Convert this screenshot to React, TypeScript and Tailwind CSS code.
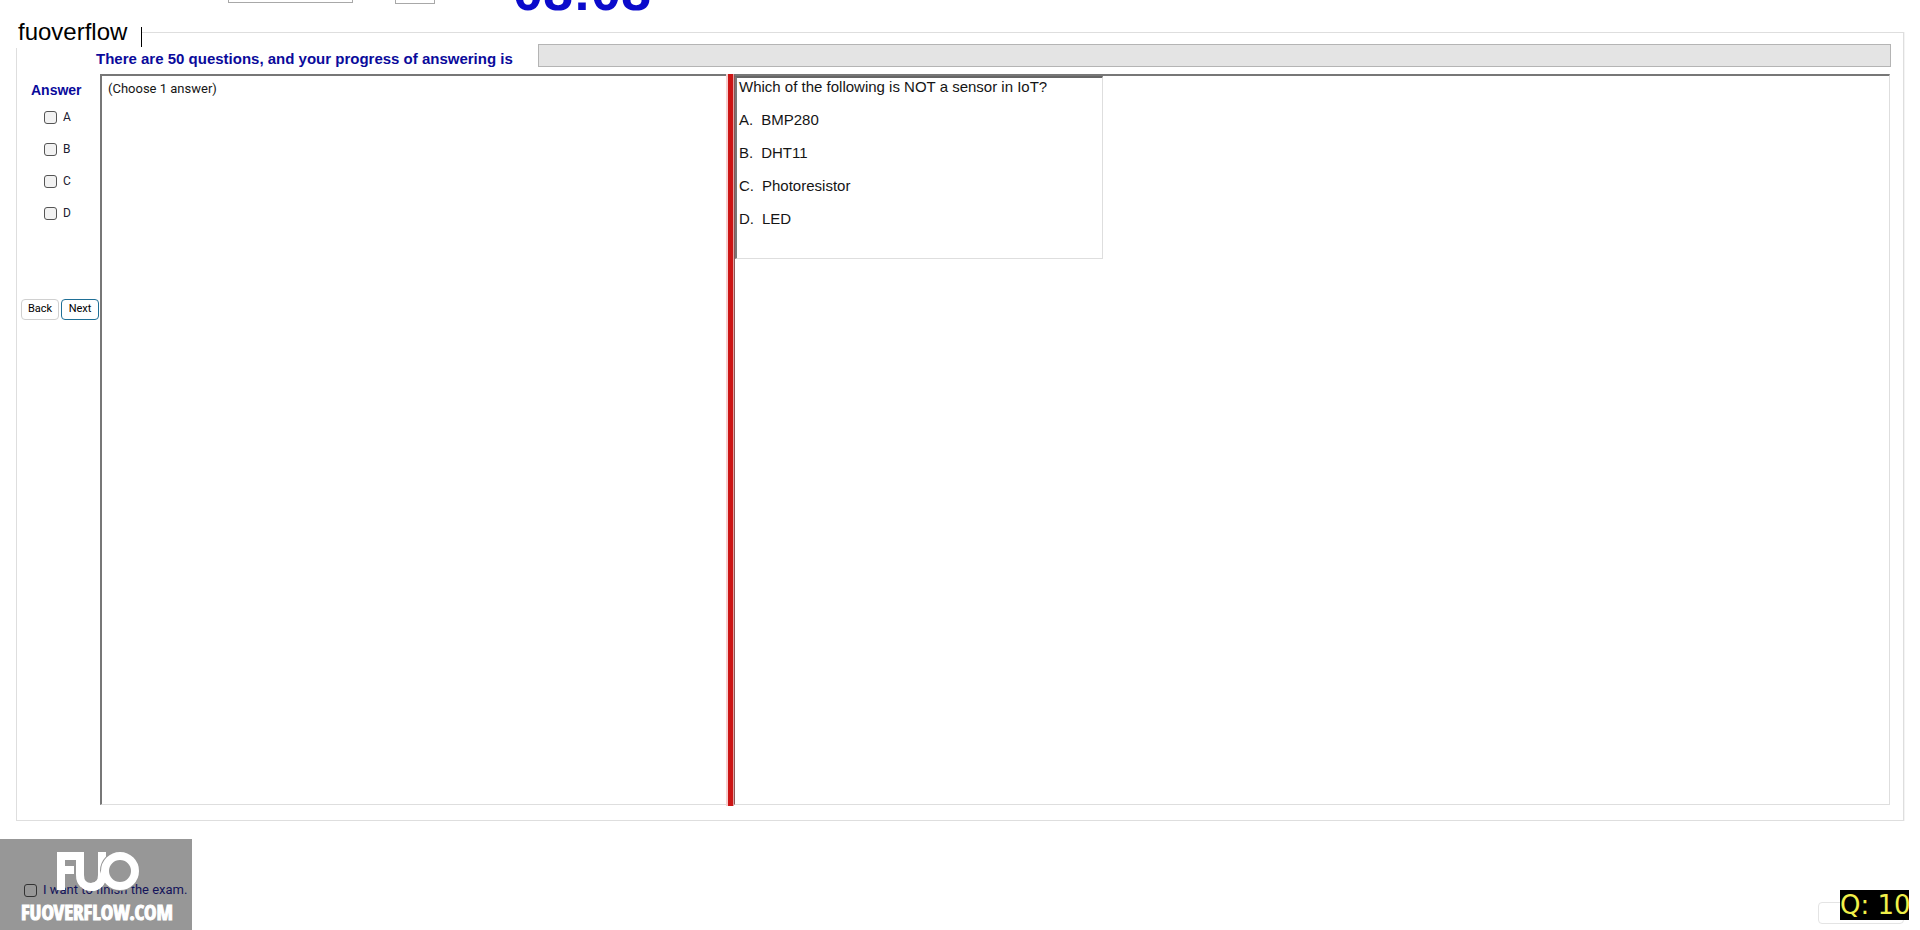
import { useState } from 'react';

const ANSWERS = ['A', 'B', 'C', 'D'];

const OPTIONS = [
  { key: 'A', text: 'BMP280' },
  { key: 'B', text: 'DHT11' },
  { key: 'C', text: 'Photoresistor' },
  { key: 'D', text: 'LED' },
];

function TopBar() {
  return (
    <header className="flex h-8 items-end overflow-hidden pl-[228px]">
      <select
        aria-label="Font"
        className="mb-[29px] h-6 w-[125px] shrink-0 border border-[#a8a8a8] bg-white text-xs"
      />
      <input
        type="number"
        aria-label="Size"
        className="mb-[28px] ml-[42px] h-6 w-10 shrink-0 border border-[#a8a8a8] bg-white text-xs"
      />
      <span className="mb-[14px] ml-[78px] text-[54px] leading-[54px] font-bold text-[#0a0acb]">08:08</span>
    </header>
  );
}

function AnswerColumn() {
  const [checked, setChecked] = useState<string[]>([]);

  const toggle = (key: string) => {
    setChecked(prev => (prev.includes(key) ? prev.filter(k => k !== key) : [...prev, key]));
  };

  return (
    <div className="flex w-[83px] shrink-0 flex-col">
      <h2 className="mt-2 pl-[14px] text-sm leading-4 font-bold text-[#0a0a9b]">Answer</h2>
      <div className="mt-[11px] flex flex-col gap-4 pl-[27px]">
        {ANSWERS.map(key => (
          <label
            key={key}
            className="flex h-4 items-center gap-[6px] font-[Roboto,sans-serif] text-xs leading-4 text-[#202030]"
          >
            <input
              type="checkbox"
              checked={checked.includes(key)}
              onChange={() => toggle(key)}
              className="size-[13px] appearance-none rounded-[3px] border border-[#555] bg-[#f2f2f2] checked:bg-[#1a6fb0]"
            />
            {key}
          </label>
        ))}
      </div>
      <div className="mt-[78px] flex gap-[2px] pl-1 font-[Roboto,sans-serif] text-[11px] text-black">
        <button className="h-[21px] w-[38px] rounded-[4px] border border-[#d0d0d0] bg-white">Back</button>
        <button className="h-[21px] w-[38px] rounded-[4px] border border-[#1f6f96] bg-white">Next</button>
      </div>
    </div>
  );
}

function QuestionBox() {
  return (
    <div className="h-[183px] w-[368px] border-t-2 border-r border-b border-l-2 border-t-[#666] border-r-[#dedede] border-b-[#dedede] border-l-[#777] pl-[2px] text-[15px] leading-[17px] text-[#151515]">
      <p>Which of the following is NOT a sensor in IoT?</p>
      <ul>
        {OPTIONS.map(option => (
          <li key={option.key} className="mt-4 flex gap-2">
            <span>{option.key}.</span>
            <span>{option.text}</span>
          </li>
        ))}
      </ul>
    </div>
  );
}

function ExamPanel() {
  return (
    <section className="relative mr-4 ml-4 border border-[#dedede] pr-[13px] pb-[14px] shadow-[1px_0_0_#f4f4f4]">
      <div className="absolute -top-[9px] -left-2 h-6 w-[132px] bg-white pl-[9px] text-2xl leading-4 text-black">
        fuoverflow
      </div>
      <div className="absolute -top-[6px] left-[124px] h-5 w-px bg-black" />

      <div className="flex items-start pt-[11px] pl-[79px]">
        <p className="w-[442px] shrink-0 pt-[7px] text-[15px] leading-4 font-bold whitespace-nowrap text-[#0a0a9b]">
          There are 50 questions, and your progress of answering is
        </p>
        <div
          role="progressbar"
          aria-label="Progress of answering"
          aria-valuenow={0}
          className="-mr-px h-[23px] flex-1 border border-[#b4b4b4] bg-[#e4e4e4]"
        />
      </div>

      <div className="mt-[7px] flex h-[732px]">
        <AnswerColumn />
        <div className="mb-px w-[626px] shrink-0 border-t-2 border-b border-l-2 border-t-[#777] border-b-[#dedede] border-l-[#777] pt-[3px] pl-[6px] font-[Roboto,sans-serif] text-[13px] leading-5 text-[#151515]">
          (Choose 1 answer)
        </div>
        <div className="w-[8px] shrink-0 border-r border-l-2 border-r-[#e0a0a0] border-l-[#f6cfcf] bg-[#cc1515]" />
        <div className="mb-px flex-1 border-t-2 border-r border-b border-l border-t-[#777] border-r-[#dedede] border-b-[#dedede] border-l-[#8a5555]">
          <QuestionBox />
        </div>
      </div>
    </section>
  );
}

function Watermark() {
  return (
    <div className="relative h-[91px] w-48 bg-[#979797]">
      <label className="flex items-center gap-[6px] pt-[43px] pl-6 font-[Roboto,sans-serif] text-[13px] leading-4 whitespace-nowrap text-[#14145a]">
        <input
          type="checkbox"
          className="size-[13px] appearance-none rounded-[3px] border border-[#333] bg-transparent checked:bg-[#333]"
        />
        I want to finish the exam.
      </label>
      <svg
        viewBox="0 0 84 42"
        className="pointer-events-none absolute top-3 left-14 h-[42px] w-[84px]"
        fill="none"
        stroke="white"
        strokeWidth="8"
      >
        <path d="M5 39V5H20M5 19H18" />
        <path d="M24 1V24C24 32 29 36 35 36S46 32 46 24V1" />
        <circle cx="64" cy="20" r="15" stroke="#979797" strokeWidth="10" />
        <circle cx="64" cy="20" r="15" />
        <path d="M35 36C43 36 46 31 49 20" />
      </svg>
      <div className="absolute top-[61px] left-[21px] font-['Impact','Open_Sans_Condensed','Roboto_Condensed','Liberation_Sans',sans-serif] text-[21px] leading-6 font-bold whitespace-nowrap text-white [-webkit-text-stroke:1px_white]">
        FUOVERFLOW.COM
      </div>
    </div>
  );
}

export default function App() {
  return (
    <main className="min-h-screen overflow-hidden bg-white font-['Liberation_Sans',Arial,sans-serif]">
      <TopBar />
      <ExamPanel />
      <footer className="mt-[18px] flex items-start justify-between">
        <Watermark />
        <div className="relative mt-[63px] mr-4">
          <button aria-label="Exit" className="block h-[22px] w-[86px] rounded border border-[#e4e4e4] bg-white" />
          <div className="absolute -top-3 -right-[5px] h-[30px] w-[69px] bg-black font-['DejaVu_Sans',sans-serif] text-[26px] leading-[30px] whitespace-nowrap text-[#f0f04a]">
            Q: 10
          </div>
        </div>
      </footer>
    </main>
  );
}
